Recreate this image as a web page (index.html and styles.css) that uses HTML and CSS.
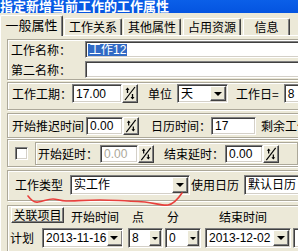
FILE: index.html
```html
<!DOCTYPE html>
<html lang="zh">
<head>
<meta charset="utf-8">
<link rel="stylesheet" href="styles.css">
</head>
<body>
<div class="win">
  <div class="title">指定新增当前工作的工作属性</div>
  <div class="tabs">
    <div class="tab sel">一般属性</div>
    <div class="tab t2">工作关系</div>
    <div class="tab t3">其他属性</div>
    <div class="tab t4">占用资源</div>
    <div class="tab t5">信息</div>
  </div>
  <div class="panel">
    <div class="grp g1">
      <div class="row r17">
        <span class="lbl w74">工作名称：</span>
        <div class="field fw240"><span class="hl">工作12</span></div>
      </div>
      <div class="row r17 gap3">
        <span class="lbl w74">第二名称：</span>
        <div class="field fw240"></div>
      </div>
    </div>

    <div class="grp g2">
      <div class="row r19">
        <span class="lbl ml4 w60">工作工期：</span>
        <div class="field w50">17.00</div>
        <div class="spin"><svg width="12" height="15" viewBox="0 0 12 15"><path d="M1 14 L11 1" stroke="#000" stroke-width="1.2" fill="none"/><path d="M3.5 7 V2.5" stroke="#000" stroke-width="1.3"/><path d="M1.5 4 L3.5 1.5 L5.5 4 Z" fill="#000"/><path d="M8.5 8 V12.5" stroke="#000" stroke-width="1.3"/><path d="M6.5 11 L8.5 13.5 L10.5 11 Z" fill="#000"/></svg></div>
        <span class="lbl ml10">单位</span>
        <div class="field combo ml5 w51"><span class="ctext cjk">天</span><span class="drop"></span></div>
        <span class="lbl ml8">工作日=</span>
        <div class="field ml5 w40">8</div>
      </div>
    </div>

    <div class="grp g3">
      <div class="row r18">
        <span class="lbl ml4 w72">开始推迟时间</span>
        <div class="field ml2 w37">0.00</div>
        <div class="spin"><svg width="12" height="14" viewBox="0 0 12 15"><path d="M1 14 L11 1" stroke="#000" stroke-width="1.2" fill="none"/><path d="M3.5 7 V2.5" stroke="#000" stroke-width="1.3"/><path d="M1.5 4 L3.5 1.5 L5.5 4 Z" fill="#000"/><path d="M8.5 8 V12.5" stroke="#000" stroke-width="1.3"/><path d="M6.5 11 L8.5 13.5 L10.5 11 Z" fill="#000"/></svg></div>
        <span class="lbl ml12 w60">日历时间：</span>
        <div class="field w45">17</div>
        <span class="lbl ml5">剩余工作</span>
      </div>
    </div>

    <div class="grp g4">
      <div class="row">
        <div class="check"></div>
        <div class="inner">
          <div class="row r18">
            <span class="lbl ml2 w60">开始延时：</span>
            <div class="field ml2 w38 dis">0.00</div>
            <div class="spin"><svg width="12" height="14" viewBox="0 0 12 15"><path d="M1 14 L11 1" stroke="#000" stroke-width="1.2" fill="none"/><path d="M3.5 7 V2.5" stroke="#000" stroke-width="1.3"/><path d="M1.5 4 L3.5 1.5 L5.5 4 Z" fill="#000"/><path d="M8.5 8 V12.5" stroke="#000" stroke-width="1.3"/><path d="M6.5 11 L8.5 13.5 L10.5 11 Z" fill="#000"/></svg></div>
            <span class="lbl ml10 w60">结束延时：</span>
            <div class="field ml1 w38">0.00</div>
            <div class="spin"><svg width="12" height="14" viewBox="0 0 12 15"><path d="M1 14 L11 1" stroke="#000" stroke-width="1.2" fill="none"/><path d="M3.5 7 V2.5" stroke="#000" stroke-width="1.3"/><path d="M1.5 4 L3.5 1.5 L5.5 4 Z" fill="#000"/><path d="M8.5 8 V12.5" stroke="#000" stroke-width="1.3"/><path d="M6.5 11 L8.5 13.5 L10.5 11 Z" fill="#000"/></svg></div>
          </div>
        </div>
      </div>
    </div>

    <div class="grp g5">
      <div class="row r20">
        <span class="lbl ml7 w48">工作类型</span>
        <div class="field combo ml7 w120"><span class="ctext cjk">实工作</span><span class="drop"></span></div>
        <span class="lbl ml1 w48">使用日历</span>
        <div class="field ml5 w80">默认日历</div>
      </div>
    </div>

    <div class="grp g6">
      <div class="row r16">
        <div class="btn ml3">关联项目</div>
        <span class="lbl ml7 w48 low">开始时间</span>
        <span class="lbl ml13 low">点</span>
        <span class="lbl ml23 low">分</span>
        <span class="lbl ml40 low">结束时间</span>
      </div>
      <div class="row r20 gap5">
        <span class="lbl ml2 w24">计划</span>
        <div class="field combo ml8 w81"><span class="ctext">2013-11-16</span><span class="drop"></span></div>
        <div class="field combo ml5 w35"><span class="ctext">8</span><span class="drop sm"></span></div>
        <div class="field combo ml2 w36"><span class="ctext">0</span><span class="drop sm"></span></div>
        <div class="field combo ml4 w86"><span class="ctext">2013-12-02</span><span class="drop"></span></div>
        <div class="field ml2 w40"></div>
      </div>
    </div>
  </div>
  <svg class="mark" width="298" height="251" viewBox="0 0 298 251"><path d="M28 196 C31 200 34 203 38 202 C44 201 48 199 53 199 C57 199 60 201 66 201 C75 201 85 200 100 200 C115 200 130 201 145 202 C155 203 163 206 168 205 C174 204 178 199 182 193" stroke="#E8403C" stroke-width="1.6" fill="none" stroke-linecap="round"/></svg>
</div>
</body>
</html>
```

FILE: styles.css
```css
html, body {
  margin: 0;
  padding: 0;
}
body {
  width: 298px;
  height: 251px;
  overflow: hidden;
  background: #ECE9D8;
  font-family: "Liberation Sans", "Noto Sans CJK SC", sans-serif;
  font-size: 12px;
  color: #000;
}
.win {
  position: relative;
  width: 298px;
  height: 251px;
  overflow: hidden;
}
.title {
  height: 13px;
  background: linear-gradient(#0B5FE8, #0454E0);
  color: #fff;
  font-weight: bold;
  font-size: 13px;
  line-height: 11px;
  white-space: nowrap;
  overflow: hidden;
  font-family: "Noto Sans CJK SC", sans-serif;
}
.tabs {
  display: flex;
  align-items: flex-end;
  height: 22px;
  font-family: "Noto Sans CJK SC", sans-serif;
  position: relative;
  z-index: 2;
}
.tab {
  box-sizing: border-box;
  height: 17px;
  width: 58px;
  display: flex;
  align-items: center;
  justify-content: center;
  line-height: 12px;
  border-top: 1px solid #fff;
  border-left: 1px solid #fff;
  border-right: 1px solid #404040;
  box-shadow: inset -1px 0 #808080;
  border-radius: 2px 2px 0 0;
  margin-bottom: 0;
}
.tab.sel {
  width: 63px;
  height: 21px;
  margin-bottom: -1px;
  font-size: 13px;
  background: #ECE9D8;
  padding-bottom: 2px;
}
.t2 { margin-left: 1px; }
.t3 { margin-left: 1px; }
.t4 { margin-left: 2px; }
.t5 { margin-left: 2px; width: 47px; }
.panel {
  border-top: 1px solid #fff;
  border-left: 1px solid #fff;
  padding: 3px 0 0 6px;
}
.grp {
  width: 330px;
  box-sizing: border-box;
  border: 1px solid #ACA899;
  box-shadow: inset 1px 1px #fff, 1px 1px #fff;
}
.g1 { padding: 1px 0 1px 1px; }
.g2 { margin-top: 2px; padding: 1px 0 6px 0; }
.g3 { margin-top: 3px; padding: 3px 0 2px 0; }
.g4 { margin-top: 1px; padding: 1px 0 1px 3px; }
.g5 { margin-top: 3px; padding: 4px 0 5px 0; }
.g6 { margin-top: 4px; padding: 1px 0 4px 0; }
.row {
  display: flex;
  align-items: center;
  white-space: nowrap;
}
.r16 { height: 16px; }
.r17 { height: 17px; }
.r18 { height: 18px; }
.r19 { height: 19px; }
.r20 { height: 20px; }
.gap3 { margin-top: 3px; }
.gap5 { margin-top: 5px; }
.lbl {
  flex: none;
  line-height: 12px;
  font-family: "Noto Sans CJK SC", sans-serif;
}
.low { padding-top: 3px; }
.w24 { width: 24px; }
.w37 { width: 37px; }
.w38 { width: 38px; }
.w40 { width: 40px; }
.w45 { width: 45px; }
.w48 { width: 48px; }
.w50 { width: 50px; }
.w51 { width: 51px; }
.w35 { width: 35px; }
.w36 { width: 36px; }
.w60 { width: 60px; }
.w72 { width: 72px; }
.w74 { width: 74px; }
.w80 { width: 80px; }
.w81 { width: 81px; }
.w86 { width: 86px; }
.w120 { width: 120px; }
.fw240 { width: 240px; }
.ml1 { margin-left: 1px; }
.ml2 { margin-left: 2px; }
.ml3 { margin-left: 3px; }
.ml4 { margin-left: 4px; }
.ml5 { margin-left: 5px; }
.ml7 { margin-left: 7px; }
.ml8 { margin-left: 8px; }
.ml10 { margin-left: 10px; }
.ml12 { margin-left: 12px; }
.ml13 { margin-left: 13px; }
.ml23 { margin-left: 23px; }
.ml40 { margin-left: 40px; }
.g1 .lbl { margin-left: 2px; }
.field {
  flex: none;
  box-sizing: border-box;
  height: 100%;
  background: #fff;
  border: 1px solid;
  border-color: #808080 #fff #fff #808080;
  box-shadow: inset 1px 1px #404040, inset -1px -1px #D4D0C8;
  display: flex;
  align-items: center;
  padding: 0 2px 0 3px;
  overflow: hidden;
  line-height: 12px;
  font-family: "Liberation Sans", "Noto Sans CJK SC", sans-serif;
}
.field.dis { color: #ACA899; }
.hl {
  background: #316AC5;
  color: #fff;
  padding: 0 1px;
  margin-left: -1px;
  line-height: 12px;
  font-family: "Noto Sans CJK SC", sans-serif;
}
.hl, .field .cjk { font-family: "Liberation Sans", "Noto Sans CJK SC", sans-serif; }
.combo { padding-right: 1px; }
.ctext { flex: 1; }
.drop {
  flex: none;
  box-sizing: border-box;
  width: 16px;
  height: calc(100% - 2px);
  background: #ECE9D8;
  border: 1px solid;
  border-color: #fff #404040 #404040 #fff;
  box-shadow: inset -1px -1px #808080;
  display: flex;
  align-items: center;
  justify-content: center;
}
.drop::after {
  content: "";
  width: 0;
  height: 0;
  border-left: 4px solid transparent;
  border-right: 4px solid transparent;
  border-top: 4px solid #000;
  margin-left: -1px;
}
.drop.sm { width: 12px; }
.drop.sm::after {
  border-left-width: 3px;
  border-right-width: 3px;
  border-top-width: 3px;
}
.spin {
  flex: none;
  box-sizing: border-box;
  width: 16px;
  height: 100%;
  background: #ECE9D8;
  border: 1px solid;
  border-color: #fff #404040 #404040 #fff;
  box-shadow: inset -1px -1px #808080;
  display: flex;
  align-items: center;
  justify-content: center;
}
.check {
  flex: none;
  box-sizing: border-box;
  width: 13px;
  height: 13px;
  margin-left: 4px;
  background: #fff;
  border: 1px solid;
  border-color: #808080 #fff #fff #808080;
  box-shadow: inset 1px 1px #404040, inset -1px -1px #D4D0C8;
}
.inner {
  box-sizing: border-box;
  width: 263px;
  margin-left: 7px;
  margin-top: 1px;
  border: 1px solid #ACA899;
  box-shadow: inset 1px 1px #fff, 1px 1px #fff;
  padding: 2px 0 1px 0;
}
.btn {
  flex: none;
  box-sizing: border-box;
  width: 53px;
  height: 16px;
  border: 1px solid;
  border-color: #fff #404040 #404040 #fff;
  box-shadow: inset -1px -1px #808080;
  display: flex;
  align-items: center;
  justify-content: center;
  line-height: 12px;
  font-family: "Noto Sans CJK SC", sans-serif;
}
.mark {
  position: absolute;
  left: 0;
  top: 0;
  pointer-events: none;
}
```
